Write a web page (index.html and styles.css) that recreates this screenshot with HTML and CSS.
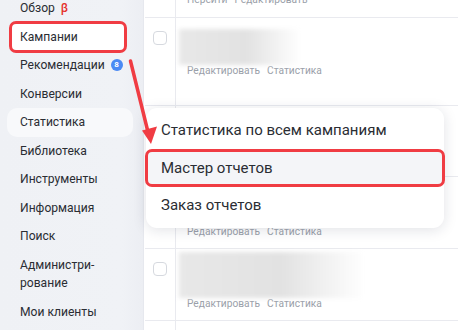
FILE: index.html
```html
<!DOCTYPE html>
<html lang="ru">
<head>
<meta charset="UTF-8">
<title>Кампании</title>
<link rel="stylesheet" href="styles.css">
</head>
<body>
    <aside class="sidebar">
        <div class="item">Обзор <span class="beta">β</span></div>
        <div class="item marked">Кампании</div>
        <div class="item">Рекомендации <span class="badge">8</span></div>
        <div class="item">Конверсии</div>
        <div class="item current">Статистика</div>
        <div class="item">Библиотека</div>
        <div class="item">Инструменты</div>
        <div class="item">Информация</div>
        <div class="item">Поиск</div>
        <div class="item">Администри-<br>рование</div>
        <div class="item">Мои клиенты</div>
    </aside>

    <main class="content">
        <div class="row first">
            <div class="check-cell"></div>
            <div class="cell">
                <div class="links"><span>Перейти</span><span>Редактировать</span></div>
            </div>
        </div>
        <div class="row r2">
            <div class="check-cell"><span class="checkbox"></span></div>
            <div class="cell">
                <div class="blur"></div>
                <div class="links"><span>Редактировать</span><span>Статистика</span></div>
            </div>
        </div>
        <div class="row r3">
            <div class="check-cell"><span class="checkbox"></span></div>
            <div class="cell"></div>
        </div>
        <div class="row r4">
            <div class="check-cell"><span class="checkbox"></span></div>
            <div class="cell">
                <div class="blur mid"></div>
                <div class="links"><span>Редактировать</span><span>Статистика</span></div>
            </div>
        </div>
        <div class="row r5">
            <div class="check-cell"><span class="checkbox"></span></div>
            <div class="cell">
                <div class="blur wide"></div>
                <div class="links"><span>Редактировать</span><span>Статистика</span></div>
            </div>
        </div>
        <div class="row r6">
            <div class="check-cell"></div>
            <div class="cell"></div>
        </div>

        <div class="menu">
            <div class="menu-item">Статистика по всем кампаниям</div>
            <div class="menu-item marked">Мастер отчетов</div>
            <div class="menu-item">Заказ отчетов</div>
        </div>
    </main>

    <svg class="arrow" width="458" height="330" viewBox="0 0 458 330">
        <line x1="130.5" y1="61" x2="147.5" y2="130" stroke="#f03c43" stroke-width="3.5" stroke-linecap="round"/>
        <polygon points="142,130.5 157,126.5 151,144" fill="#f03c43"/>
    </svg>
</body>
</html>
```

FILE: styles.css
```css
body {
    margin: 0;
    width: 458px;
    height: 330px;
    overflow: hidden;
    display: flex;
    font-family: Roboto, "Noto Sans", sans-serif;
    color: #2a2d33;
    background: #fff;
}

.sidebar {
    width: 143px;
    flex-shrink: 0;
    background: linear-gradient(90deg, #eff1f5 0%, #f0f2f6 85%, #eceef3 100%);
    border-right: 1px solid #e6e8ee;
    margin-top: -6px;
    display: flex;
    flex-direction: column;
}

.item {
    margin: 0 10px 0 7px;
    padding: 5px 0 5px 13px;
    font-size: 12.1px;
    line-height: 18.5px;
    border-radius: 10px;
    display: flex;
    align-items: center;
    gap: 6px;
}

.item.current {
    background: #f8f9fb;
}

.item.marked {
    margin: -1.5px 16px -1.5px 9px;
    padding: 3.5px 0 3.5px 8px;
    background: #fff;
    border: 3px solid #f03c43;
    border-radius: 7px;
}

.beta {
    color: #e5322d;
    font-weight: 500;
}

.badge {
    width: 12px;
    height: 12px;
    border-radius: 50%;
    background: #4a8af4;
    color: #fff;
    font-size: 8px;
    font-weight: 700;
    line-height: 12px;
    text-align: center;
}

.content {
    flex: 1;
    position: relative;
    margin-left: 1px;
}

.row {
    display: flex;
    border-bottom: 1px solid #e9eaef;
}

.row.first { height: 30px; margin-top: -13px; }
.row.r2 { height: 87px; }
.row.r3 { height: 70px; }
.row.r4 { height: 71px; }
.row.r5 { height: 71px; }
.row.r6 { height: 20px; }

.check-cell {
    width: 31px;
    flex-shrink: 0;
    border-right: 1px solid #e9eaef;
    padding: 13px 0 0 8px;
    box-sizing: border-box;
}

.checkbox {
    display: block;
    width: 14px;
    height: 14px;
    box-sizing: border-box;
    border: 1px solid #d6d9df;
    border-radius: 4px;
    background: #fff;
}

.cell {
    flex: 1;
    padding-left: 3px;
    display: flex;
    flex-direction: column;
}

.row.first .cell {
    justify-content: flex-end;
    padding-bottom: 11px;
}

.row.r2 .cell { padding-top: 11px; }
.row.r4 .cell, .row.r5 .cell { padding-top: 3px; }

.blur {
    width: 122px;
    height: 36px;
    background: linear-gradient(90deg, #e8e8e8 0%, #e2e2e2 55%, #ffffff 100%);
    filter: blur(2px);
}

.blur.mid {
    height: 46px;
    width: 130px;
}

.blur.wide {
    width: 186px;
    height: 46px;
}

.links {
    display: flex;
    gap: 7px;
    padding-left: 8px;
    font-size: 10.2px;
    line-height: 12px;
    color: #9aa0a9;
}

.menu {
    position: absolute;
    left: 1px;
    top: 108px;
    width: 298px;
    padding: 4px 0;
    background: #fff;
    border-radius: 11px;
    box-shadow: 0 2px 14px rgba(20, 30, 60, 0.13);
    box-sizing: border-box;
}

.menu-item {
    height: 37px;
    padding-left: 15px;
    font-size: 15px;
    line-height: 37px;
}

.menu-item.marked {
    margin: 0 -1px 0 -1px;
    padding-left: 13px;
    height: 38px;
    line-height: 32px;
    background: #f4f5f8;
    border: 3px solid #f03c43;
    border-radius: 7px;
    box-sizing: border-box;
}

.arrow {
    position: absolute;
    left: 0;
    top: 0;
    pointer-events: none;
}
```
